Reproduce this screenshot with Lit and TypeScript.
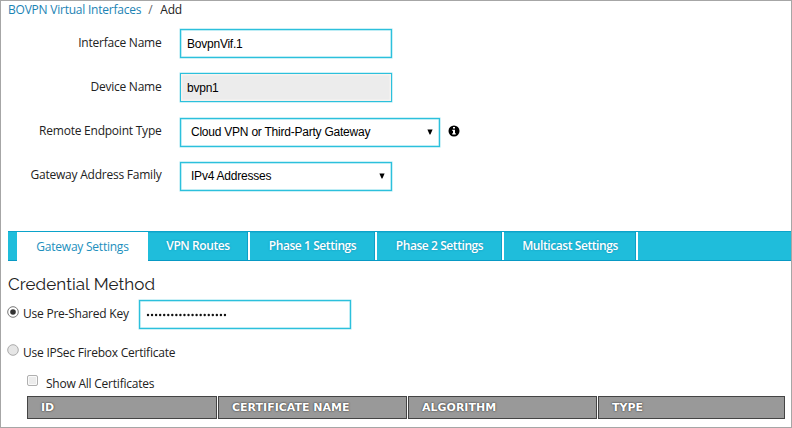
import { LitElement, html, css, svg } from "lit";
import { customElement } from "lit/decorators.js";
import { classMap } from "lit/directives/class-map.js";

const TABS = [
  { id: "gateway", label: "Gateway Settings" },
  { id: "routes", label: "VPN Routes" },
  { id: "phase1", label: "Phase 1 Settings" },
  { id: "phase2", label: "Phase 2 Settings" },
  { id: "multicast", label: "Multicast Settings" },
];

const COLUMNS = [
  { id: "c-id", label: "ID" },
  { id: "c-name", label: "CERTIFICATE NAME" },
  { id: "c-alg", label: "ALGORITHM" },
  { id: "c-type", label: "TYPE" },
];

const arrow = svg`<svg class="arrow" width="6" height="6" viewBox="0 0 6 6"><path d="M0.4 0.5H5.6L3.4 5.6H2.6Z" fill="#000"/></svg>`;

@customElement("app-root")
export class AppRoot extends LitElement {
  static styles = css`
    :host {
      display: block;
      box-sizing: border-box;
      width: 792px;
      height: 428px;
      overflow: hidden;
      background: #fff;
      border: 1px solid #a6a6a6;
      font: 12px/16px "Open Sans", "Noto Sans", sans-serif;
      letter-spacing: -0.23px;
      color: #222;
    }
    * { box-sizing: border-box; }
    .crumbs { display: flex; height: 28px; padding: 1px 0 0 7px; white-space: pre; }
    .crumbs a { color: #1c83b4; }
    .crumbs i { font-style: normal; color: #666; padding: 0 8px 0 7px; }
    .form { display: grid; grid-auto-rows: 44.33px; height: 202px; }
    .row { display: flex; align-items: flex-start; }
    .label { width: 160.5px; margin-right: 18.5px; padding-top: 5.5px; text-align: right; }
    .field {
      width: 211.5px;
      height: 29px;
      display: flex;
      flex: none;
      align-items: center;
      border: 1.5px solid #2cc0dc;
      box-shadow: inset 0 0 0 0.5px #7fdbeb, 0 0 0 0.5px #9be3ef;
      padding: 0 6px;
      font: 12px/16px "Liberation Sans", Arial, sans-serif;
      color: #000;
    }
    .disabled { background: #ececec; box-shadow: inset 0 0 0 1.5px #f6f2ef, 0 0 0 0.5px #9be3ef; }
    .select { padding: 0 6px 0 10px; justify-content: space-between; }
    .wide { width: 260px; }
    .info { margin: 7px 0 0 8px; }
    .tabs {
      display: flex;
      height: 30px;
      margin-left: 7px;
      background: #1fbddb;
      border-top: 1px solid #0ba3ca;
      border-bottom: 1px solid #0899c4;
      padding-left: 9px;
    }
    .tab {
      height: 28px;
      border-right: 2px solid #fff;
      box-shadow: inset -1px 0 0 #0e9fc6, inset 0 1px 0 #18b0d2;
      text-align: center;
      line-height: 27px;
      letter-spacing: -0.42px;
      font-weight: 600;
      color: #fff;
      text-shadow: 0 0 2px #128db5;
      white-space: nowrap;
    }
    .tab.active {
      height: 29px;
      background: #fff;
      color: #218fbd;
      letter-spacing: -0.23px;
      font-weight: 400;
      text-shadow: none;
      border: 0;
      box-shadow: none;
      line-height: 29px;
    }
    .gateway { width: 131px; }
    .routes { width: 102px; }
    .phase1, .phase2 { width: 127px; }
    .multicast { width: 134px; }
    h2 {
      margin: 11px 0 0 7px;
      height: 27px;
      font: 400 17px/24px "Raleway", "Lato", sans-serif;
      letter-spacing: 0.08px;
      color: #222;
    }
    .choice { display: flex; padding-left: 6px; }
    .choice .text { margin-left: 4px; white-space: nowrap; }
    .psk { height: 43px; }
    .psk .text { width: 106px; padding-top: 7px; }
    .psk svg.radio { margin-top: 7px; }
    .psk .field { margin: 1px 0 0 10px; padding-left: 6px; }
    .cert { height: 33px; }
    .cert .text { padding-top: 3px; }
    .cert svg.radio { margin-top: 2px; }
    .show { display: flex; height: 21px; padding-left: 26px; }
    .box { width: 11px; height: 11px; border: 1px solid #b0b0b0; border-radius: 2px; background: #ececec; box-shadow: inset 0 0 0 1px #fafafa; }
    .show .text { margin-left: 8px; padding-top: 1px; }
    .table { display: grid; grid-template-columns: 190px 189px 189px 187px; column-gap: 1px; width: 758px; margin-left: 26px; height: 23px; }
    .th {
      background: #999;
      border: 1px solid #444;
      padding-left: 13px;
      font: bold 11px/22px "DejaVu Sans", Verdana, sans-serif;
      height: 23px;
      letter-spacing: 0;
      color: #fff;
      text-shadow: 0 0 2px #333, 0 0 1px #555;
      white-space: nowrap;
    }
  `;

  private radio(on: boolean) {
    return html`<svg class="radio" width="12" height="12" viewBox="0 0 12 12">
      <circle cx="6" cy="6" r="5.3" fill=${on ? "#fff" : "#e6e6e6"} stroke=${on ? "#777" : "#aaa"} />
      ${on ? svg`<circle cx="6" cy="6" r="2.8" fill="#333" />` : ""}
    </svg>`;
  }

  render() {
    return html`
      <div class="crumbs"><a>BOVPN Virtual Interfaces</a><i>/</i><span>Add</span></div>
      <div class="form">
        <div class="row"><span class="label">Interface Name</span><div class="field">BovpnVif.1</div></div>
        <div class="row"><span class="label">Device Name</span><div class="field disabled">bvpn1</div></div>
        <div class="row">
          <span class="label">Remote Endpoint Type</span>
          <div class="field select wide"><span>Cloud VPN or Third-Party Gateway</span>${arrow}</div>
          <svg class="info" width="12" height="12" viewBox="0 0 12 12">
            <circle cx="6" cy="6" r="5.5" fill="#000" />
            <path d="M5 2H7V3.6H5ZM4.3 4.8H7V8.2H7.8V9.5H4.2V8.2H5V6H4.3Z" fill="#fff" />
          </svg>
        </div>
        <div class="row"><span class="label">Gateway Address Family</span><div class="field select"><span>IPv4 Addresses</span>${arrow}</div></div>
      </div>
      <div class="tabs">
        ${TABS.map((t, i) => html`<div class=${classMap({ tab: true, active: i === 0, [t.id]: true })}>${t.label}</div>`)}
      </div>
      <h2>Credential Method</h2>
      <div class="choice psk">${this.radio(true)}<span class="text">Use Pre-Shared Key</span>
        <div class="field"><svg width="82" height="4" viewBox="0 0 82 4">
          ${Array.from({ length: 20 }, (_, i) => svg`<circle cx=${2 + i * 4.05} cy="2" r="1.2" fill="#111" />`)}
        </svg></div>
      </div>
      <div class="choice cert">${this.radio(false)}<span class="text">Use IPSec Firebox Certificate</span></div>
      <div class="show"><span class="box"></span><span class="text">Show All Certificates</span></div>
      <div class="table">${COLUMNS.map((c) => html`<div class="th ${c.id}">${c.label}</div>`)}</div>
    `;
  }
}
